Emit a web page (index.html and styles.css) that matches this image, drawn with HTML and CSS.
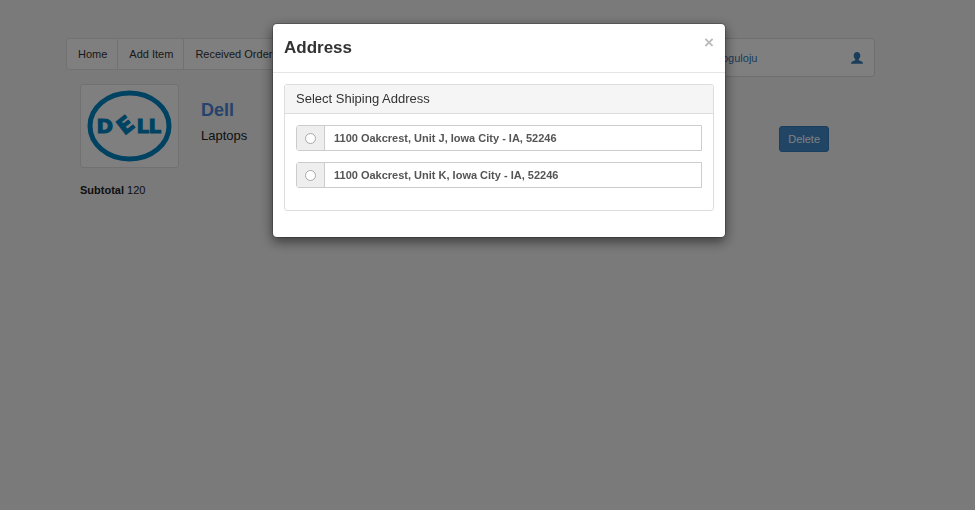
FILE: index.html
```html
<!DOCTYPE html>
<html lang="en">
<head>
<meta charset="utf-8">
<title>Cart</title>
<link rel="stylesheet" href="styles.css">
</head>
<body>
<div class="page">
  <header class="topbar">
    <nav class="nav">
      <a href="#">Home</a>
      <a href="#">Add Item</a>
      <a href="#">Received Orders</a>
    </nav>
    <div class="account">
      <a href="#">oguloju</a>
      <a href="#" aria-label="Profile">
        <svg class="user" viewBox="0 0 12 12" aria-hidden="true"><path d="M6 0C3.9 0 2.7 1.5 2.7 3.6C2.7 5.2 3.4 6.5 4.3 7.2V8C4.1 8.5 3.5 8.7 2.4 9.1C0.8 9.7 0 10.2 0 11.8H12C12 10.2 11.2 9.7 9.6 9.1C8.5 8.7 7.9 8.5 7.7 8V7.2C8.6 6.5 9.3 5.2 9.3 3.6C9.3 1.5 8.1 0 6 0Z"/></svg>
      </a>
    </div>
  </header>
  <main>
    <article class="item">
      <div class="thumb">
        <svg viewBox="0 0 86 72" role="img" aria-label="Dell">
          <ellipse cx="43" cy="36" rx="39.5" ry="33" fill="#fff" stroke="#0085c3" stroke-width="5"/>
          <g class="mark">
            <text x="10" y="43">D</text>
            <text class="tilt" x="-7" y="7" transform="translate(39 36) rotate(-38)">E</text>
            <text x="50" y="43">L</text>
            <text x="62" y="43">L</text>
          </g>
        </svg>
      </div>
      <div class="info">
        <h3><a href="#">Dell</a></h3>
        <p>Laptops</p>
      </div>
      <button class="delete" type="button">Delete</button>
    </article>
    <p class="subtotal"><strong>Subtotal</strong> 120</p>
  </main>
</div>
<div class="backdrop">
  <section class="modal" role="dialog" aria-labelledby="modal-title">
    <header class="modal-head">
      <h1 id="modal-title">Address</h1>
      <button class="close" type="button" aria-label="Close">×</button>
    </header>
    <div class="modal-body">
      <fieldset class="panel" aria-labelledby="panel-title">
        <h2 id="panel-title">Select Shiping Address</h2>
        <div class="choices">
          <div class="choice">
            <span class="addon"><input type="radio" name="address" id="address-j"></span>
            <label for="address-j">1100 Oakcrest, Unit J, Iowa City - IA, 52246</label>
          </div>
          <div class="choice">
            <span class="addon"><input type="radio" name="address" id="address-k"></span>
            <label for="address-k">1100 Oakcrest, Unit K, Iowa City - IA, 52246</label>
          </div>
        </div>
      </fieldset>
    </div>
  </section>
</div>
</body>
</html>
```
FILE: styles.css
```css
* { box-sizing: border-box; }
body {
  margin: 0;
  background: #f5f5f5;
  color: #222;
  font: 11px/16px "Liberation Sans", Arial, sans-serif;
}
h1, h2, h3, p { margin: 0; font-weight: normal; }
a { color: #337ab7; text-decoration: none; }
button { font: inherit; cursor: pointer; }

.page { padding: 38px 100px 0 66px; }
.topbar { display: flex; align-items: flex-start; justify-content: space-between; }
.nav { display: flex; }
.nav a {
  padding: 7px 10px 7px 11px;
  border: 1px solid #e2e2e2;
  background: #fff;
  color: #333;
}
.nav a + a { border-left: 0; }
.nav a:first-child { border-radius: 3px 0 0 3px; }
.nav a:last-child { border-radius: 0 3px 3px 0; }
.account {
  display: flex;
  align-items: center;
  justify-content: space-between;
  width: 165px;
  height: 39px;
  padding: 0 11px;
  border: 1px solid #ddd;
  border-radius: 3px;
  background: #fff;
}
.user { display: block; width: 12px; height: 12px; fill: #337ab7; }

.item { display: flex; align-items: flex-start; gap: 22px; margin-top: 7px; padding: 0 46px 0 14px; }
.thumb { padding: 5px; border: 1px solid #e2e2e2; border-radius: 3px; background: #fff; }
.thumb svg { display: block; width: 87px; height: 72px; }
.mark { font: bold 20px "DejaVu Sans", sans-serif; fill: #0085c3; stroke: #0085c3; stroke-width: 1px; }
.mark .tilt { font-size: 22px; }
.info { flex: 1; padding-top: 14px; }
.info h3 { font-size: 18px; line-height: 24px; font-weight: bold; }
.info h3 a { color: #4a86d8; }
.info p { margin-top: 6px; font-size: 13px; }
.delete {
  height: 26px;
  margin-top: 42px;
  padding: 0 8px;
  border: 1px solid #357ebd;
  border-radius: 3px;
  background: #428bca;
  color: #fff;
}
.subtotal { margin: 14px 0 0 14px; }

.backdrop {
  position: fixed;
  inset: 0;
  padding: 23px 0 0 23px;
  background: rgba(0, 0, 0, .5);
}
.modal {
  width: 454px;
  max-width: 100%;
  margin: 0 auto;
  border: 1px solid rgba(0, 0, 0, .2);
  border-radius: 5px;
  background: #fff;
  background-clip: padding-box;
  box-shadow: 0 4px 12px rgba(0, 0, 0, .5);
  color: #333;
}
.modal-head {
  display: flex;
  align-items: flex-start;
  justify-content: space-between;
  padding: 12px 11px;
  border-bottom: 1px solid #e5e5e5;
}
.modal-head h1 { font-size: 17px; line-height: 24px; font-weight: bold; }
.close {
  padding: 0;
  border: 0;
  background: none;
  color: #bbb;
  font-size: 17px;
  line-height: 14px;
  font-weight: bold;
}
.modal-body { padding: 11px 11px 26px; }
.panel { margin: 0; padding: 0; border: 1px solid #ddd; border-radius: 3px; }
.panel h2 {
  padding: 6px 11px;
  border-bottom: 1px solid #ddd;
  border-radius: 2px 2px 0 0;
  background: #f5f5f5;
  font-size: 13px;
}
.choices { display: grid; gap: 11px; padding: 11px 11px 22px; }
.choice { display: flex; height: 26px; border: 1px solid #ccc; border-radius: 3px 0 0 3px; }
.addon {
  display: flex;
  align-items: center;
  justify-content: center;
  width: 28px;
  border-right: 1px solid #ccc;
  background: #eee;
}
.addon input {
  appearance: none;
  width: 11px;
  height: 11px;
  margin: 0;
  border: 1px solid #aaa;
  border-radius: 50%;
  background: #fff;
}
.addon input:checked { border: 4px solid #337ab7; }
.choice label { flex: 1; padding: 0 9px; line-height: 25px; font-weight: bold; color: #555; }
```
